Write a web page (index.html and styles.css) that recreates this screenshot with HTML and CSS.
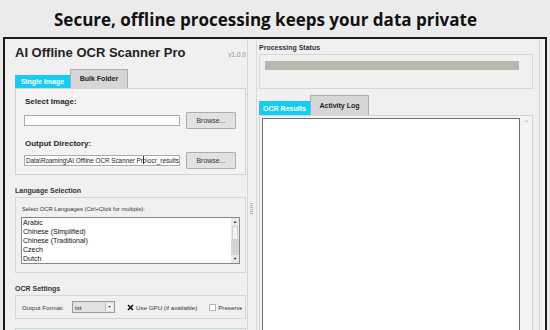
FILE: index.html
```html
<!DOCTYPE html>
<html lang="en">
<head>
    <meta charset="UTF-8">
    <meta name="viewport" content="width=device-width, initial-scale=1.0">
    <title>AI Offline OCR Scanner Pro</title>
    <link rel="stylesheet" href="styles.css">
</head>
<body>

<h1 class="headline">Secure, offline processing keeps your data private</h1>

<div class="window">
    <div class="left-pane">
        <div class="app-header">
            <span class="app-title">AI Offline OCR Scanner Pro</span>
            <span class="version">v1.0.0</span>
        </div>

        <div class="tabs">
            <div class="tab active">Single Image</div>
            <div class="tab">Bulk Folder</div>
        </div>
        <div class="tab-panel source-panel">
            <div class="field-label">Select Image:</div>
            <div class="field-row">
                <div class="text-input"></div>
                <button class="browse-btn">Browse...</button>
            </div>
            <div class="field-label second">Output Directory:</div>
            <div class="field-row tight">
                <div class="text-input path">Data\Roaming\AI Offline OCR Scanner Pr<span class="caret"></span>o\ocr_results</div>
                <button class="browse-btn">Browse...</button>
            </div>
        </div>

        <div class="group-title">Language Selection</div>
        <div class="group lang-group">
            <div class="hint">Select OCR Languages (Ctrl+Click for multiple):</div>
            <div class="listbox">
                <ul class="list-items">
                    <li>Arabic</li>
                    <li>Chinese (Simplified)</li>
                    <li>Chinese (Traditional)</li>
                    <li>Czech</li>
                    <li>Dutch</li>
                </ul>
                <div class="scrollbar">
                    <div class="arrow up">&#9650;</div>
                    <div class="thumb"></div>
                    <div class="track"></div>
                    <div class="arrow down">&#9660;</div>
                </div>
            </div>
        </div>

        <div class="group-title">OCR Settings</div>
        <div class="group settings-group">
            <div class="settings-row">
                <span class="setting-label">Output Format:</span>
                <div class="select-box">
                    <span class="select-value">txt</span>
                    <span class="select-arrow">&#9660;</span>
                </div>
                <label class="check checked">
                    <svg class="check-box" width="7" height="7" viewBox="0 0 7 7">
                        <path d="M1 1 L6 6 M6 1 L1 6" stroke="#111" stroke-width="1.6"/>
                    </svg>
                    Use GPU (if available)
                </label>
                <label class="check">
                    <span class="check-box empty"></span>
                    Preserve
                </label>
            </div>
        </div>
        <div class="group next-group"></div>
    </div>

    <div class="sash"><span class="grip"></span></div>

    <div class="right-pane">
        <div class="group-title top">Processing Status</div>
        <div class="group status-group">
            <div class="progress"></div>
        </div>

        <div class="tabs results-tabs">
            <div class="tab active wide">OCR Results</div>
            <div class="tab log">Activity Log</div>
        </div>
        <div class="tab-panel results-panel">
            <div class="results-text"></div>
            <div class="results-scroll"><span class="scroll-up">&#8963;</span></div>
        </div>
    </div>
</div>

</body>
</html>
```

FILE: styles.css
```css
body {
    margin: 0;
    height: 330px;
    overflow: hidden;
    background-color: #ebebeb;
    font-family: "Liberation Sans", Arial, sans-serif;
    color: #1e1e1e;
}
.headline {
    margin: 0;
    height: 35px;
    padding: 2px 19px 0 0;
    font-family: "Open Sans", sans-serif;
    font-size: 17px;
    font-weight: 700;
    line-height: 35px;
    text-align: center;
    color: #111;
}
.window {
    display: flex;
    height: 320px;
    margin: 0 3px;
    border: 2px solid #1b1b1b;
    border-bottom: none;
    background-color: #f0f0f0;
}

/* left side */
.left-pane {
    flex-shrink: 0;
    width: 231px;
    padding: 6px 1px 0 10px;
    border-right: 1px solid #d6d6d6;
}
.app-header {
    display: flex;
    justify-content: space-between;
    align-items: baseline;
    height: 15px;
}
.app-title {
    font-size: 13px;
    font-weight: bold;
    line-height: 15px;
    color: #222;
}
.version {
    font-size: 6.5px;
    color: #8c8c8c;
}
.tabs {
    display: flex;
    align-items: flex-end;
    height: 19px;
    margin-top: 9px;
}
.tab {
    box-sizing: border-box;
    width: 58px;
    height: 19px;
    border: 1px solid #adadad;
    border-bottom: none;
    background-color: #d6d6d6;
    font-size: 7px;
    font-weight: bold;
    line-height: 17px;
    text-align: center;
    color: #222;
}
.tab.active {
    width: 55px;
    height: 13px;
    border: none;
    background-color: #14cdf4;
    line-height: 13px;
    color: #fff;
}
.tab-panel {
    border: 1px solid #d3d3d3;
    background-color: #f3f3f3;
}
.source-panel {
    padding: 8px 8px 5px 8px;
}
.field-label {
    margin-left: 1px;
    font-size: 8px;
    font-weight: bold;
    line-height: 10px;
    color: #262626;
}
.field-label.second {
    margin-top: 10px;
}
.field-row {
    display: flex;
    align-items: center;
    gap: 6px;
    height: 17px;
    margin-top: 5px;
}
.field-row.tight {
    margin-top: 3px;
}
.text-input {
    box-sizing: border-box;
    width: 156px;
    height: 11px;
    border: 1px solid #a9abb0;
    background-color: #fff;
}
.text-input.path {
    overflow: hidden;
    padding-left: 1px;
    font-size: 6.3px;
    line-height: 9px;
    white-space: nowrap;
    color: #222;
}
.caret {
    display: inline-block;
    width: 1px;
    height: 8px;
    margin-right: -1px;
    vertical-align: -1px;
    background-color: #333;
}
.browse-btn {
    box-sizing: border-box;
    width: 50px;
    height: 17px;
    padding: 0;
    border: 1px solid #adadad;
    border-radius: 1px;
    background-color: #e1e1e1;
    font-family: "Liberation Sans", Arial, sans-serif;
    font-size: 7px;
    color: #333;
}
.group-title {
    margin: 11px 0 2px;
    font-size: 7px;
    font-weight: bold;
    line-height: 9px;
    color: #333;
}
.group-title.top {
    margin-top: 0;
}
.group {
    border: 1px solid #d6d6d6;
}
.lang-group {
    padding: 7px 5px 8px 5px;
}
.hint {
    margin-left: 1px;
    font-size: 5.8px;
    line-height: 8px;
    color: #333;
}
.listbox {
    display: flex;
    height: 47px;
    margin-top: 4px;
    box-sizing: border-box;
    border: 1px solid #828790;
    background-color: #fff;
}
.list-items {
    flex: 1;
    margin: 0;
    padding: 0 0 0 1px;
    list-style: none;
    overflow: hidden;
}
.list-items li {
    font-size: 7px;
    line-height: 9px;
    color: #111;
}
.scrollbar {
    display: flex;
    flex-direction: column;
    width: 8px;
    background-color: #e8e8e8;
}
.scrollbar .arrow {
    height: 8px;
    font-size: 4px;
    line-height: 8px;
    text-align: center;
    color: #222;
}
.scrollbar .thumb {
    height: 12px;
    margin: 0 1px;
    background-color: #f4f4f4;
    border: 1px solid #d0d0d0;
}
.scrollbar .track {
    flex: 1;
    background-color: #d4d4d4;
}
.settings-group {
    height: 22px;
    padding: 0 2px 0 6px;
    overflow: hidden;
}
.settings-row {
    display: flex;
    align-items: center;
    width: 220px;
    height: 22px;
    overflow: hidden;
    white-space: nowrap;
    font-size: 6.2px;
    color: #333;
}
.settings-row > * {
    flex-shrink: 0;
}
.setting-label {
    width: 50px;
}
.select-box {
    box-sizing: border-box;
    display: flex;
    align-items: center;
    justify-content: space-between;
    width: 43px;
    height: 12px;
    border: 1px solid #9a9a9a;
    background-color: #e2e2e2;
}
.select-value {
    padding-left: 2px;
    color: #222;
}
.select-arrow {
    width: 7px;
    height: 8px;
    margin-right: 1px;
    border-left: 1px solid #bdbdbd;
    background-color: #f2f2f2;
    font-size: 3.5px;
    line-height: 8px;
    text-align: center;
    color: #222;
}
.check {
    display: flex;
    align-items: center;
    gap: 2px;
    margin-left: 12px;
}
.check-box {
    flex-shrink: 0;
    display: block;
    width: 7px;
    height: 7px;
}
.check-box.empty {
    box-sizing: border-box;
    border: 1px solid #b6b6b6;
    background-color: #fff;
}
.next-group {
    height: 20px;
    margin-top: 9px;
    border-color: #c9d6d9;
}

/* splitter */
.sash {
    flex-shrink: 0;
    width: 8px;
    padding-top: 164px;
}
.grip {
    display: block;
    width: 3px;
    height: 12px;
    margin-left: 2px;
    background: repeating-linear-gradient(#b8b8b8 0 1px, #e6e6e6 1px 2px);
}

/* right side */
.right-pane {
    flex: 1;
    display: flex;
    flex-direction: column;
    margin-right: 5px;
    padding: 4px 6px 0 2px;
    border-left: 1px solid #dadada;
    border-right: 1px solid #d2d2d2;
}
.status-group {
    box-sizing: border-box;
    height: 35px;
    padding: 6px 13px 0 5px;
}
.progress {
    height: 9px;
    background-color: #bab7ad;
}
.results-tabs {
    height: 20px;
    margin-top: 6px;
}
.results-tabs .tab {
    height: 20px;
    width: 59px;
    line-height: 19px;
}
.results-tabs .tab.active {
    width: 51px;
    height: 14px;
    line-height: 15px;
}
.results-panel {
    flex: 1;
    display: flex;
    padding: 2px 0 0 2px;
}
.results-text {
    flex: 1;
    border: 1px solid #6f6f6f;
    border-bottom: none;
    background-color: #fff;
}
.results-scroll {
    width: 12px;
    text-align: center;
}
.scroll-up {
    display: block;
    margin-top: 2px;
    font-size: 8px;
    line-height: 8px;
    color: #a8a8a8;
}
```
